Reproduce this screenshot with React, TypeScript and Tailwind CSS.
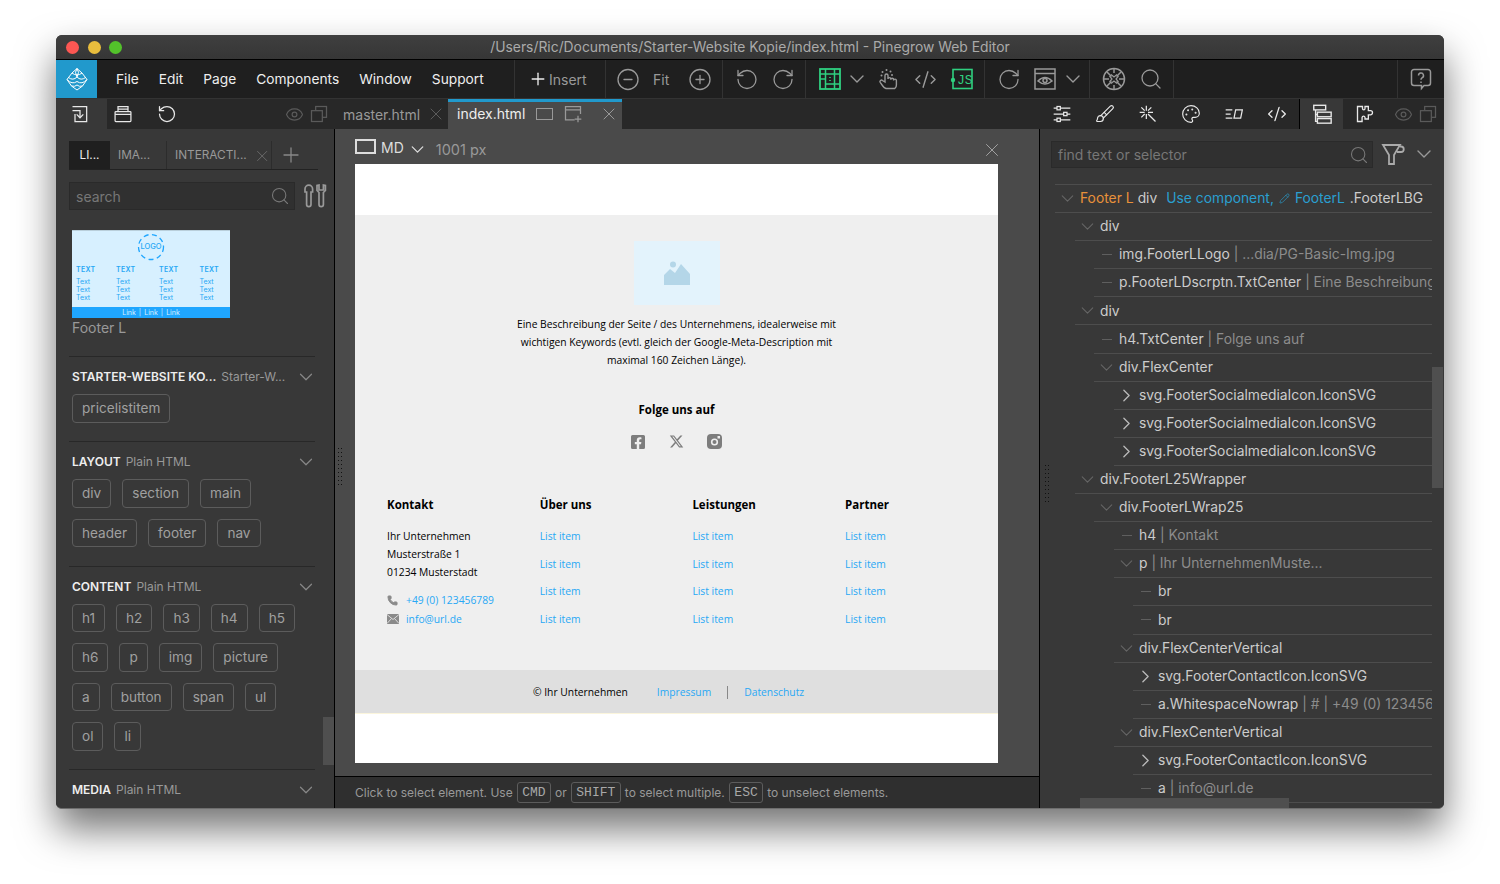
import React from "react";
import { ChevronDown, ChevronRight, X, Plus, Search, Eye, RotateCcw, RotateCw, CircleMinus, CirclePlus, CodeXml, Brush, Palette, Phone, Pencil } from "lucide-react";
import { FaFacebookSquare } from "react-icons/fa";
import { FaXTwitter } from "react-icons/fa6";

const ui = "font-['Inter','Liberation_Sans',sans-serif]";
const web = "font-['Open_Sans','Liberation_Sans',sans-serif]";

function S({ children, size = 24, c = "#999", sw = 1.5 }: { children: React.ReactNode; size?: number; c?: string; sw?: number }) {
  return (
    <svg width={size} height={size} viewBox="0 0 24 24" fill="none" stroke={c} strokeWidth={sw} className="shrink-0">
      {children}
    </svg>
  );
}

const Logo = () => (
  <svg width="24" height="24" viewBox="0 0 24 24" fill="none" stroke="#fff" strokeWidth="1">
    <path d="M12 1.5 L17 6 L22 12.5 L17.5 19 L12 23 L6.5 19 L2 12.5 L7 6 Z" />
    <path d="M7 6 Q12 10 17 6 M3.5 10.5 Q8 14 12 10 Q16 14 20.5 10.5 M2 12.5 Q7 18 12 14.5 Q17 18 22 12.5 M6.5 19 Q10 20 12 18 Q14 20 17.5 19 M12 1.5 Q9 5 12 10 Q15 5 12 1.5" />
  </svg>
);
const LayoutIcon = () => (
  <S c="#2fd080" size={24}>
    <rect x="2" y="2" width="20" height="20" strokeWidth="1.8" />
    <path d="M7.5 2v20M16.5 2v20M7.5 7h9M7.5 17h9M2 7h5M2 12h5M16.5 7h5.5M16.5 17h5.5" />
    <path d="M12 10v1M12 13v1" strokeWidth="1.6" />
  </S>
);
const JsIcon = () => (
  <svg width="24" height="24" viewBox="0 0 24 24" fill="none" className="shrink-0">
    <rect x="3" y="2.5" width="19" height="19" stroke="#2fd080" strokeWidth="1.6" />
    <circle cx="3" cy="13" r="2.2" fill="#2fd080" />
    <text x="7" y="17" fontSize="13" fill="#2fd080" fontFamily="Liberation Mono, monospace">JS</text>
  </svg>
);
const Hand = () => (
  <S size={24} sw={1.4}>
    <path d="M9 21.5c-1.5-.5-2.5-1.5-3.2-2.5l-2.6-3.6a1.5 1.5 0 0 1 2.3-1.9L8 15V8.5a1.5 1.5 0 0 1 3 0V12a1.4 1.4 0 0 1 2.8 0v.7a1.4 1.4 0 0 1 2.8 0v.8a1.4 1.4 0 0 1 2.8 0V18a4 4 0 0 1-1.6 3.5Z" />
    <path d="M4.5 8.5h.01M5.5 5h.01M9.5 3h.01M13.5 4.5h.01M15 8h.01" strokeWidth="2" strokeLinecap="round" />
  </S>
);
const EyeWin = () => (
  <S>
    <rect x="2" y="2" width="20" height="20" />
    <path d="M2 6.5h20" />
    <path d="M5 14 Q12 7 19 14 Q12 20 5 14Z" />
    <circle cx="12" cy="13.5" r="2" />
  </S>
);
const Compass = () => (
  <S>
    <circle cx="12" cy="12" r="10.5" />
    <path d="M5 5l4.5 4.5M19 5l-4.5 4.5M5 19l4.5-4.5M19 19l-4.5-4.5M2 12h5M17 12h5" />
    <path d="M12 2v4M12 18v4" />
    <path d="M9 7.5l3 2.5 3-2.5M9 16.5l3-2.5 3 2.5M7.5 9l2.5 3-2.5 3M16.5 9l-2.5 3 2.5 3" strokeWidth="1.2" />
  </S>
);
const Help = () => (
  <svg width="24" height="24" viewBox="0 0 24 24" fill="none" stroke="#999" strokeWidth="1.5" className="shrink-0">
    <path d="M5 2.5h14a2.5 2.5 0 0 1 2.5 2.5v11a2.5 2.5 0 0 1-2.5 2.5h-4l-2.5 3v-3H5A2.5 2.5 0 0 1 2.5 16V5A2.5 2.5 0 0 1 5 2.5Z" />
    <path d="M9.5 8.5a2.5 2.5 0 1 1 3.5 2.3c-.8.4-1 1-1 2M12 14.5v1.5" />
  </svg>
);
const ImportIcon = () => (
  <S c="#e8e8e8" size={20}>
    <path d="M3 3h17v18H6V12" />
    <path d="M3 8h9v8" />
    <path d="M8 12.5l4 4 4-4" />
  </S>
);
const PrintIcon = () => (
  <S c="#e8e8e8" size={20}>
    <path d="M6 9V3h12v6M6 6h12" />
    <rect x="2.5" y="9" width="19" height="12" rx="1" />
    <path d="M2.5 12.5h19" />
  </S>
);
const CopyIcon = () => (
  <S c="#5a5a5a" size={20}>
    <rect x="8" y="3" width="13" height="13" />
    <rect x="3" y="8" width="13" height="13" fill="#282828" />
  </S>
);
const WinAdd = () => (
  <S c="#999" size={20}>
    <path d="M21 12V3H3v16h11" />
    <path d="M3 7h18M18 14v8M14 18h8" />
  </S>
);
const SlidersI = () => (
  <S c="#e8e8e8" size={20}>
    <path d="M2 5h20M2 12h20M2 19h20" />
    <rect x="6" y="3" width="4" height="4" fill="#282828" />
    <rect x="14" y="10" width="4" height="4" fill="#282828" />
    <rect x="6" y="17" width="4" height="4" fill="#282828" />
  </S>
);
const WandI = () => (
  <S c="#e8e8e8" size={20}>
    <path d="M10 2v6M10 12v6M2 10h6M12 10h6M4 4l4 4M16 4l-4 4M4 16l4-4M12 12l9 9" />
  </S>
);
const TextBox = () => (
  <S c="#e8e8e8" size={20}>
    <path d="M2 7h8M2 12h6M2 17h8" />
    <path d="M14 7h8l-2 10h-8Z" />
  </S>
);
const TreeI = () => (
  <S c="#e8e8e8" size={22}>
    <rect x="3" y="2.5" width="13" height="5" />
    <rect x="7" y="10" width="15" height="5" />
    <rect x="7" y="17" width="15" height="5" />
    <path d="M5 7.5V20h2M5 12.5h2" />
  </S>
);
const PuzzleI = () => (
  <S c="#e8e8e8" size={20} sw={1.6}>
    <path d="M3 3h6v2.5a1.5 1.5 0 0 0 3 0V3h4v5h2.5a1.8 1.8 0 0 1 0 5H16v5h-4v-2a1.8 1.8 0 0 0-3.5 0v5H3V3Z" />
  </S>
);
const Funnel = () => (
  <S c="#aaa" size={24} sw={1.8}>
    <path d="M2 3h17l-6 10v9H8v-9Z" />
    <path d="M19 4.500h1a2.700 2.700 0 0 1 0 5.500h-4" />
  </S>
);
const Tools = () => (
  <svg width="24" height="26" viewBox="0 0 24 26" fill="none" stroke="#999" strokeWidth="1.7" className="shrink-0">
    <path d="M2 6a3.8 3.8 0 0 1 7.6 0v3H8v12.5a2.2 2.2 0 0 1-4.400 0V9H2Z" />
    <path d="M14 2.500v5l2 2v12a2.200 2.200 0 0 0 4.400 0v-12l2-2v-5l-2-.5v5h-4.400v-5Z" />
  </svg>
);
const Insta = () => (
  <svg width="15" height="15" viewBox="0 0 15 15" className="shrink-0">
    <rect width="15" height="15" rx="4" fill="#7d7d7d" />
    <circle cx="7.5" cy="8" r="3.6" fill="#efefef" />
    <circle cx="7.5" cy="8" r="2" fill="#7d7d7d" />
    <rect x="10.5" y="2" width="2.5" height="2.5" fill="#efefef" />
  </svg>
);
const Mail = () => (
  <svg width="12" height="10" viewBox="0 0 12 10" className="shrink-0">
    <rect width="12" height="10" fill="#8a8a8a" />
    <path d="M0 .5 6 5.5 12 .5M0 9.5 4.5 4.5M12 9.5 7.5 4.5" stroke="#efefef" strokeWidth=".8" fill="none" />
  </svg>
);
const ImgIcon = () => (
  <svg width="26" height="24" viewBox="0 0 26 24">
    <circle cx="9" cy="3.5" r="3" fill="#b4d6e8" />
    <path d="M0 14 L6 8 L11 12 L17 3 L26 13 V24 H0Z" fill="#b4d6e8" />
  </svg>
);
const Logo2 = () => (
  <svg width="28" height="28" viewBox="0 0 28 28" fill="none" stroke="#1fa6ff" strokeWidth="1.3" strokeDasharray="5 3.5">
    <circle cx="14" cy="14" r="12.5" />
  </svg>
);

const Ic = ({ ml, children, w = 24 }: { ml: string; children?: React.ReactNode; w?: number }) => (
  <div className={`flex items-center justify-center ${ml}`} style={{ width: w }}>
    {children}
  </div>
);

function Tag({ t }: { t: string }) {
  return <div className="flex h-[28.5px] items-center rounded-[4px] border border-[#5c5c5c] px-[9px] text-[13.6px] text-[#a0a0a0]">{t}</div>;
}

function Section({ title, sub, rows }: { title: string; sub: string; rows?: string[][] }) {
  return (
    <div className="border-t border-[#282828]">
      <div className="flex h-[37px] items-center pl-[3px] pt-[3px] text-[12px]">
        <span className="font-semibold text-[#eee]">{title}</span>
        <span className="ml-[5px] text-[#999]">{sub}</span>
        <ChevronDown size={22} color="#888" strokeWidth={1.3} className="-mr-[2px] ml-auto" />
      </div>
      {rows && (
        <div className="flex flex-col gap-[11px] pb-[18.5px] pl-[3px]">
          {rows.map((r, i) => (
            <div key={i} className="flex gap-[11px]">
              {r.map((t) => (
                <Tag key={t} t={t} />
              ))}
            </div>
          ))}
        </div>
      )}
    </div>
  );
}

const thumbCols = ["ml-[4px] w-[40px]", "w-[43px]", "w-[40.5px]", "w-[30px]"];

function Thumb() {
  return (
    <div className="flex h-[88px] w-[158px] flex-col border-t border-[#b9cfdb] bg-[#d7f0ff] text-[#28a8f5]">
      <div className="relative flex h-[31px] items-center justify-center">
        <Logo2 />
        <span className="absolute text-[7.5px] font-medium leading-none">LOGO</span>
      </div>
      <div className="mt-[4px] flex flex-1">
        {thumbCols.map((c, i) => (
          <div key={i} className={`${c} flex flex-col text-[7px] leading-[8px]`}>
            <span className="mb-[3.5px] font-semibold tracking-[0.3px]">TEXT</span>
            <span>Text</span>
            <span>Text</span>
            <span>Text</span>
          </div>
        ))}
      </div>
      <div className="flex h-[11px] items-center justify-center gap-[3px] bg-[#1fa6ff] text-[7px] leading-none text-[#d7f0ff]">
        <span>Link</span>|<span>Link</span>|<span>Link</span>
      </div>
    </div>
  );
}

function LeftPanel() {
  return (
    <div className="relative flex w-[279px] shrink-0 flex-col overflow-hidden border-r border-black bg-[#383838] pl-[13px] pt-[12px]">
      <div className="mr-[16px] flex h-[29px] shrink-0 border-b border-[#222] text-[11.8px] text-[#999]">
        <div className="flex w-[41px] items-center justify-center bg-[#1f1f1f] pt-[2px] text-[#eee]">LI...</div>
        <div className="flex w-[57px] items-center border-r border-[#2c2c2c] pl-[8px] pt-[2px]">IMA...</div>
        <div className="flex w-[105px] items-center border-r border-[#2c2c2c] pl-[8px] pt-[2px]">
          INTERACTI...
          <X size={20} color="#777" strokeWidth={1} className="ml-[6px]" />
        </div>
        <Plus size={24} color="#888" strokeWidth={1.3} className="ml-[7px] mt-[2px]" />
      </div>
      <div className="mt-[12px] flex h-[28px] shrink-0 items-center">
        <div className="flex h-[28px] w-[226px] items-center border border-[#2a2a2a] bg-[#303030] pl-[6px] pr-[4px] text-[14px] text-[#777]">
          search
          <Search size={20} color="#777" strokeWidth={1.3} className="ml-auto" />
        </div>
        <div className="ml-[8px]">
          <Tools />
        </div>
      </div>
      <div className="ml-[3px] mt-[20px] shrink-0">
        <Thumb />
        <div className="text-[14px] leading-[20px] text-[#999]">Footer L</div>
      </div>
      <div className="mt-[18px] w-[246px] shrink-0">
        <Section title="STARTER-WEBSITE KO..." sub="Starter-W..." rows={[["pricelistitem"]]} />
        <Section title="LAYOUT" sub="Plain HTML" rows={[["div", "section", "main"], ["header", "footer", "nav"]]} />
        <Section
          title="CONTENT"
          sub="Plain HTML"
          rows={[
            ["h1", "h2", "h3", "h4", "h5"],
            ["h6", "p", "img", "picture"],
            ["a", "button", "span", "ul"],
            ["ol", "li"],
          ]}
        />
        <Section title="MEDIA" sub="Plain HTML" />
      </div>
      <div className="absolute right-0 top-[588px] h-[48px] w-[11px] bg-[#4f4f4f]" />
    </div>
  );
}

function Col({ title, first }: { title: string; first?: boolean }) {
  return (
    <div className="w-[152.7px]">
      <div className="text-[11.5px] font-bold leading-[18px] text-black">{title}</div>
      {first ? (
        <div className="mt-[13px] text-[10.3px] leading-[18px] text-black">
          <div>Ihr Unternehmen</div>
          <div>Musterstraße 1</div>
          <div>01234 Musterstadt</div>
          <div className="mt-[10px] flex h-[18px] items-center text-[#28a8f5]">
            <Phone size={11} fill="#8a8a8a" stroke="#8a8a8a" className="mr-[8px]" />
            +49 (0) 123456789
          </div>
          <div className="mt-[1px] flex h-[18px] items-center text-[#28a8f5]">
            <span className="mr-[7px]">
              <Mail />
            </span>
            info@url.de
          </div>
        </div>
      ) : (
        <div className="mt-[9px] text-[10.3px] leading-[27.7px] text-[#28a8f5]">
          <div>List item</div>
          <div>List item</div>
          <div>List item</div>
          <div>List item</div>
        </div>
      )}
    </div>
  );
}

function Canvas() {
  return (
    <div className={`flex h-[599px] w-[643px] flex-col bg-white ${web}`}>
      <div className="h-[51px]" />
      <div className="flex h-[455px] flex-col items-center bg-[#efefef] pt-[26px]">
        <div className="flex h-[64px] w-[86px] items-center justify-center bg-[#e3f3fc]">
          <ImgIcon />
        </div>
        <div className="mt-[10px] text-center text-[10.3px] leading-[18px] text-black">
          <div>Eine Beschreibung der Seite / des Unternehmens, idealerweise mit</div>
          <div>wichtigen Keywords (evtl. gleich der Google-Meta-Description mit</div>
          <div>maximal 160 Zeichen Länge).</div>
        </div>
        <div className="mt-[32px] text-[11.5px] font-bold leading-[18px] text-black">Folge uns auf</div>
        <div className="-ml-[1px] mt-[15px] flex h-[15px] items-center gap-[23px]">
          <FaFacebookSquare size={16} color="#7d7d7d" />
          <FaXTwitter size={15} color="#7d7d7d" />
          <Insta />
        </div>
        <div className="mt-[47px] flex w-full pl-[32px]">
          <Col title="Kontakt" first />
          <Col title="Über uns" />
          <Col title="Leistungen" />
          <Col title="Partner" />
        </div>
      </div>
      <div className="flex h-[43px] items-center bg-[#dfdfdf] pl-[178px] pt-[2px] text-[10.3px] text-black">
        <span>© Ihr Unternehmen</span>
        <span className="ml-[29px] text-[#28a8f5]">Impressum</span>
        <span className="ml-[16px] h-[13px] w-px bg-[#888]" />
        <span className="ml-[16px] text-[#28a8f5]">Datenschutz</span>
      </div>
      <div className="h-px bg-[#fbf5dc]" />
    </div>
  );
}

function Kbd({ t }: { t: string }) {
  return <span className="mx-[4px] inline-flex h-[21px] items-center rounded-[3px] border border-[#5c5c5c] px-[4.5px] font-['Liberation_Mono',monospace] text-[13px] text-[#a8a8a8]">{t}</span>;
}

function Center() {
  return (
    <div className="relative flex w-[705px] shrink-0 flex-col border-r border-black bg-[#4a4a4a]">
      <div className="flex h-[35px] items-start pl-[20px] pr-[41px] pt-[10px]">
        <div className="h-[15px] w-[21px] border-2 border-[#ddd]" />
        <span className="ml-[5px] text-[14px] leading-[18px] text-[#ddd]">MD</span>
        <ChevronDown size={21} color="#ddd" strokeWidth={1.5} className="ml-[3px]" />
        <span className="ml-[8px] mt-[2px] text-[14.5px] leading-[18px] text-[#999]">1001 px</span>
        <X size={22} color="#aaa" strokeWidth={1} className="ml-auto -mr-[5px]" />
      </div>
      <div className="pl-[20px]">
        <Canvas />
      </div>
      <div className="mt-[13px] flex h-[33px] flex-1 items-center border-t border-black bg-[#2f2f2f] pl-[20px] text-[12px] text-[#999]">
        Click to select element. Use<Kbd t="CMD" />or<Kbd t="SHIFT" />to select multiple.<Kbd t="ESC" />to unselect elements.
      </div>
      <Dots cls="left-[3px] top-[319px]" />
    </div>
  );
}

function Dots({ cls }: { cls: string }) {
  return (
    <div className={`absolute grid w-[4px] grid-cols-2 gap-x-[2px] gap-y-[3px] ${cls}`}>
      {Array.from({ length: 20 }).map((_, i) => (
        <span key={i} className="h-px w-px bg-[#111]" />
      ))}
    </div>
  );
}

type Node = { l: number; k: "v" | "r" | "d"; t: string; m?: string };
const nodes: Node[] = [
  { l: 1, k: "v", t: "div" },
  { l: 2, k: "d", t: "img.FooterLLogo", m: " | ...dia/PG-Basic-Img.jpg" },
  { l: 2, k: "d", t: "p.FooterLDscrptn.TxtCenter", m: " | Eine Beschreibung der Seite / des" },
  { l: 1, k: "v", t: "div" },
  { l: 2, k: "d", t: "h4.TxtCenter", m: " | Folge uns auf" },
  { l: 2, k: "v", t: "div.FlexCenter" },
  { l: 3, k: "r", t: "svg.FooterSocialmediaIcon.IconSVG" },
  { l: 3, k: "r", t: "svg.FooterSocialmediaIcon.IconSVG" },
  { l: 3, k: "r", t: "svg.FooterSocialmediaIcon.IconSVG" },
  { l: 1, k: "v", t: "div.FooterL25Wrapper" },
  { l: 2, k: "v", t: "div.FooterLWrap25" },
  { l: 3, k: "d", t: "h4", m: " | Kontakt" },
  { l: 3, k: "v", t: "p", m: " | Ihr UnternehmenMuste..." },
  { l: 4, k: "d", t: "br" },
  { l: 4, k: "d", t: "br" },
  { l: 3, k: "v", t: "div.FlexCenterVertical" },
  { l: 4, k: "r", t: "svg.FooterContactIcon.IconSVG" },
  { l: 4, k: "d", t: "a.WhitespaceNowrap", m: " | # | +49 (0) 123456789" },
  { l: 3, k: "v", t: "div.FlexCenterVertical" },
  { l: 4, k: "r", t: "svg.FooterContactIcon.IconSVG" },
  { l: 4, k: "d", t: "a", m: " | info@url.de" },
];

const indents = ["ml-0", "ml-[20px]", "ml-[39px]", "ml-[59px]", "ml-[78px]"];

function Mark({ k }: { k: Node["k"] }) {
  if (k === "v") return <ChevronDown size={21} color="#666" strokeWidth={1.2} />;
  if (k === "r") return <ChevronRight size={21} color="#bbb" strokeWidth={1.5} />;
  return <span className="mx-auto h-px w-[10px] bg-[#5f5f5f]" />;
}

function RightPanel() {
  return (
    <div className="relative flex-1 overflow-hidden bg-[#383838]">
      <div className="flex h-[55px] items-start pl-[11px] pt-[12px]">
        <div className="flex h-[27px] w-[322px] items-center border border-[#2a2a2a] bg-[#303030] pl-[6px] pr-[3px] text-[14px] text-[#777]">
          find text or selector
          <Search size={20} color="#777" strokeWidth={1.3} className="ml-auto" />
        </div>
        <div className="ml-[8px] mt-[1px]">
          <Funnel />
        </div>
        <ChevronDown size={24} color="#999" strokeWidth={1.4} className="ml-[7px] mt-[1px]" />
      </div>
      <div className="ml-[15px] w-[377px] overflow-hidden border-t border-[#4d4d4d] text-[13.85px] text-[#ccc]">
        <div className="flex h-[28.1px] items-center whitespace-nowrap border-b border-[#4d4d4d]">
          <span className="flex w-[25px] justify-center">
            <Mark k="v" />
          </span>
          <span className="text-[#e8913a]">Footer L</span>
          <span className="ml-[4px]">div</span>
          <span className="ml-[9px] text-[#2a9fd0]">Use component,</span>
          <Pencil size={11} color="#2a9fd0" strokeWidth={1.4} className="ml-[5px]" />
          <span className="ml-[5px] text-[#2a9fd0]">FooterL</span>
          <span className="ml-[5px]">.FooterLBG</span>
        </div>
        {nodes.map((n, i) => (
          <div key={i} className={`flex h-[28.1px] items-center whitespace-nowrap border-b border-[#4d4d4d] ${indents[n.l]}`}>
            <span className="flex w-[25px] shrink-0 justify-center">
              <Mark k={n.k} />
            </span>
            <span>{n.t}</span>
            {n.m && <span className="whitespace-pre text-[#8c8c8c]">{n.m}</span>}
          </div>
        ))}
      </div>
      <div className="absolute right-[1px] top-[238px] h-[121px] w-[11px] bg-[#4f4f4f]" />
      <div className="absolute bottom-0 left-[40px] h-[10px] w-[209px] bg-[#4f4f4f]" />
      <Dots cls="left-[5px] top-[336px]" />
    </div>
  );
}

export default function App() {
  return (
    <div className={`h-[884px] w-[1500px] overflow-hidden bg-white pl-[56px] pt-[35px] ${ui}`}>
      <div className="flex h-[774px] w-[1388px] flex-col overflow-hidden rounded-[6px] border-b border-[#6e6e6e] bg-[#383838] shadow-[0_20px_38px_rgba(0,0,0,0.55)]">
        {/* title bar */}
        <div className="relative flex h-[25px] shrink-0 items-center justify-center border-b border-black bg-gradient-to-b from-[#3f3f3f] to-[#363636] text-[13.87px] text-[#aaa]">
          <div className="absolute left-[10px] top-[6px] flex gap-[8.5px]">
            <span className="h-[13px] w-[13px] rounded-full bg-[#fc5753]" />
            <span className="h-[13px] w-[13px] rounded-full bg-[#e9bd3d]" />
            <span className="h-[13px] w-[13px] rounded-full bg-[#53c22b]" />
          </div>
          /Users/Ric/Documents/Starter-Website Kopie/index.html - Pinegrow Web Editor
        </div>
        {/* menu bar */}
        <div className="flex h-[39px] shrink-0 items-stretch border-b border-[#333] bg-[#1f1f1f]">
          <div className="flex w-[41px] items-center justify-center bg-[#2199cc]">
            <Logo />
          </div>
          <div className="flex w-[418px] items-center gap-[20px] border-r border-[#333] pl-[19px] text-[13.75px] text-[#eee]">
            <span>File</span>
            <span>Edit</span>
            <span>Page</span>
            <span>Components</span>
            <span>Window</span>
            <span>Support</span>
          </div>
          <div className="flex w-[91px] items-center border-r border-[#333] pl-[13px] text-[14px] text-[#999]">
            <Plus size={20} color="#eee" strokeWidth={1.6} />
            <span className="ml-[1px]">Insert</span>
          </div>
          <div className="flex w-[117px] items-center border-r border-[#333]">
            <Ic ml="ml-[10px]"><CircleMinus size={25} color="#999" strokeWidth={1.3} /></Ic>
            <span className="ml-[13px] w-[16px] text-[14px] text-[#999]">Fit</span>
            <Ic ml="ml-[19px]"><CirclePlus size={25} color="#999" strokeWidth={1.3} /></Ic>
          </div>
          <div className="flex w-[83px] items-center border-r border-[#333]">
            <Ic ml="ml-[12px]"><RotateCcw size={25} color="#999" strokeWidth={1.3} /></Ic>
            <Ic ml="ml-[12px]"><RotateCw size={25} color="#999" strokeWidth={1.3} /></Ic>
          </div>
          <div className="flex w-[179px] items-center border-r border-[#333]">
            <Ic ml="ml-[12px]"><LayoutIcon /></Ic>
            <Ic ml="ml-[3px]"><ChevronDown size={24} color="#999" strokeWidth={1.4} /></Ic>
            <Ic ml="ml-[8px]"><Hand /></Ic>
            <Ic ml="ml-[12px]"><CodeXml size={23} color="#999" strokeWidth={1.5} /></Ic>
            <Ic ml="ml-[13px]"><JsIcon /></Ic>
          </div>
          <div className="flex w-[105px] items-center border-r border-[#333]">
            <Ic ml="ml-[12px]"><RotateCw size={25} color="#999" strokeWidth={1.3} /></Ic>
            <Ic ml="ml-[12px]"><EyeWin /></Ic>
            <Ic ml="ml-[4px]"><ChevronDown size={24} color="#999" strokeWidth={1.4} /></Ic>
          </div>
          <div className="flex w-[84px] items-center border-r border-[#333]">
            <Ic ml="ml-[12px]"><Compass /></Ic>
            <Ic ml="ml-[13px]"><Search size={26} color="#999" strokeWidth={1.3} /></Ic>
          </div>
          <div className="flex-1 border-r border-[#333]" />
          <div className="flex w-[46px] items-center justify-center">
            <Help />
          </div>
        </div>
        {/* tab bar */}
        <div className="flex h-[30px] shrink-0 items-stretch bg-[#282828]">
          <div className="flex w-[51px] items-center justify-center bg-[#383838] pr-[4px]">
            <ImportIcon />
          </div>
          <div className="flex w-[341px] items-center text-[14px] text-[#999]">
            <Ic ml="ml-[4px]"><PrintIcon /></Ic>
            <Ic ml="ml-[20px]"><RotateCcw size={20} color="#e8e8e8" strokeWidth={1.5} /></Ic>
            <Ic ml="ml-[105px]" w={20}><Eye size={19} color="#5a5a5a" strokeWidth={1.5} /></Ic>
            <Ic ml="ml-[5px]" w={20}><CopyIcon /></Ic>
            <span className="ml-[14px]">master.html</span>
            <X size={20} color="#666" strokeWidth={1} className="ml-[6px]" />
          </div>
          <div className="flex w-[174px] items-center border-t-[3px] border-[#2199cc] bg-[#4a4a4a] pb-[4px] pl-[9px] text-[14px] text-[#eee]">
            index.html
            <div className="ml-[11px] h-[12px] w-[17px] border-[1.5px] border-[#999]" />
            <span className="ml-[10px]"><WinAdd /></span>
            <X size={20} color="#aaa" strokeWidth={1} className="ml-[16px]" />
          </div>
          <div className="flex-1" />
          {[<SlidersI />, <Brush size={20} color="#e8e8e8" strokeWidth={1.4} />, <WandI />, <Palette size={20} color="#e8e8e8" strokeWidth={1.4} />, <TextBox />, <CodeXml size={20} color="#e8e8e8" strokeWidth={1.6} />].map((icon, i) => (
            <div key={i} className="flex w-[43px] items-center justify-center">
              {icon}
            </div>
          ))}
          <div className="ml-px flex w-[44px] items-center justify-center border-l border-black bg-[#383838]">
            <TreeI />
          </div>
          <div className="flex w-[44px] items-center justify-center">
            <PuzzleI />
          </div>
          <div className="ml-[6px] flex w-[20px] items-center justify-center">
            <Eye size={19} color="#5a5a5a" strokeWidth={1.5} />
          </div>
          <div className="ml-[5px] mr-[6px] flex w-[20px] items-center justify-center">
            <CopyIcon />
          </div>
        </div>
        {/* body */}
        <div className="flex min-h-0 flex-1">
          <LeftPanel />
          <Center />
          <RightPanel />
        </div>
      </div>
    </div>
  );
}
